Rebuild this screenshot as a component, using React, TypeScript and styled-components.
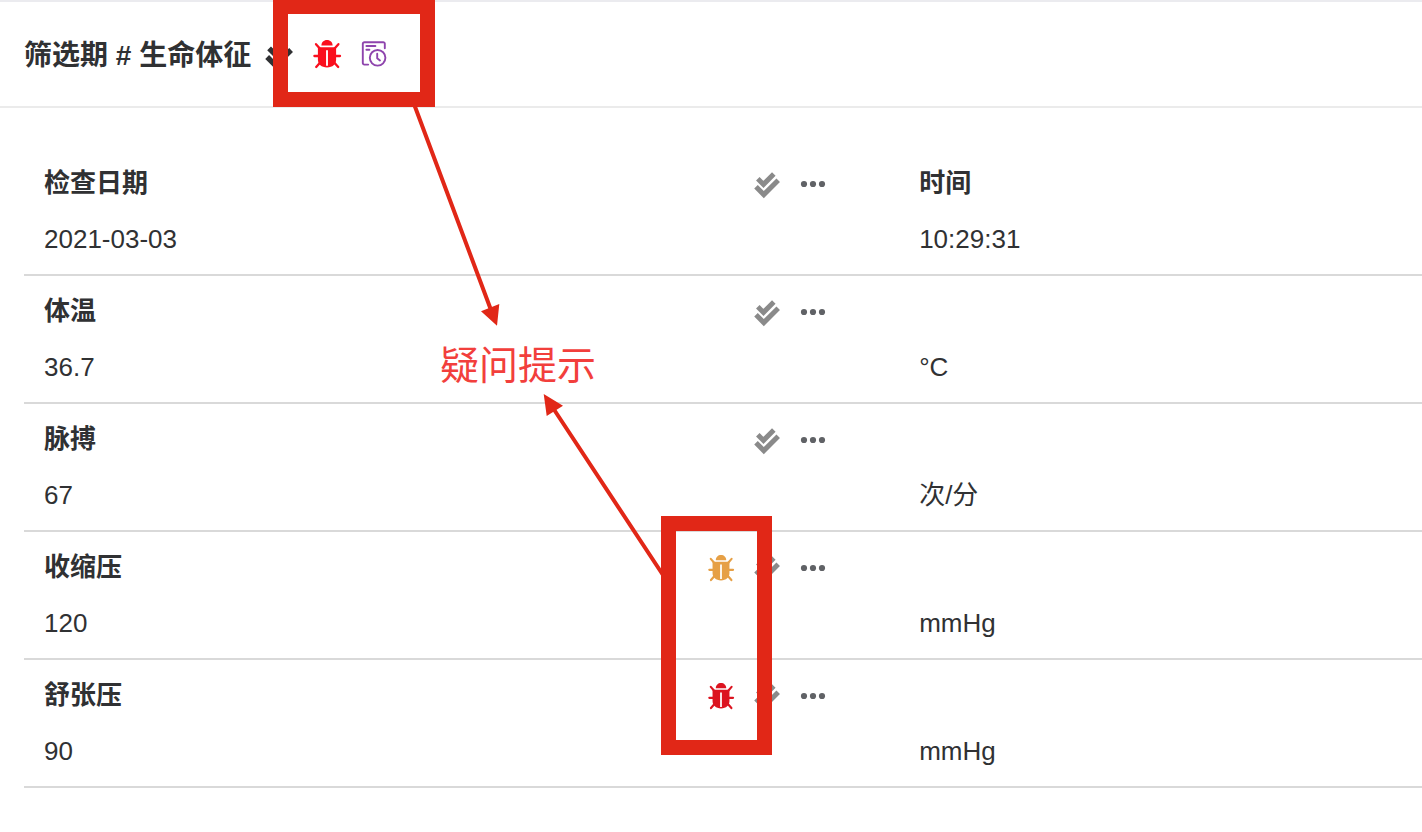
import React from 'react';
import styled, { createGlobalStyle } from 'styled-components';

const GlobalStyle = createGlobalStyle`
  * { box-sizing: border-box; }
  body {
    margin: 0;
    background: #fff;
    color: #303133;
    font-family: "Liberation Sans", "Noto Sans CJK SC", sans-serif;
    font-size: 26px;
  }
`;

const ANNOTATION_RED = '#e12717';

const Page = styled.main`
  position: relative;
  overflow: hidden;
  min-height: 100vh;
`;

const Header = styled.header`
  display: flex;
  align-items: center;
  height: 108px;
  padding: 0 24px;
  border-top: 2px solid #ebebef;
  border-bottom: 2px solid #ebebeb;
`;

const Title = styled.h1`
  margin: 0 14px 0 0;
  padding-top: 4px;
  font-size: 28px;
  line-height: 40px;
  font-weight: 700;
  white-space: nowrap;
`;

const HeaderActions = styled.div`
  display: flex;
  align-items: center;
  gap: 20px;
`;

const IconButton = styled.button<{ $color: string }>`
  display: flex;
  flex: none;
  padding: 0;
  border: 0;
  background: none;
  color: ${(p) => p.$color};
  cursor: pointer;

  svg {
    overflow: visible;
  }
`;

const Form = styled.section`
  padding: 40px 0 40px 24px;
`;

const Row = styled.div`
  display: grid;
  grid-template-columns: 62.6% 1fr;
  padding: 7px 0;
  border-bottom: 2px solid #d9d9d9;
`;

const Field = styled.dl`
  margin: 0;
  padding-left: 20px;
`;

const LabelLine = styled.div`
  display: flex;
  align-items: center;
  height: 56px;
  padding-right: 73px;
`;

const Label = styled.dt`
  flex: 1;
  line-height: 56px;
  font-weight: 700;
`;

const Value = styled.dd`
  margin: 0;
  height: 56px;
  line-height: 56px;
`;

const RowActions = styled.div`
  display: flex;
  align-items: center;
  gap: 20px;
  padding-top: 2px;
`;

const Annotations = styled.div`
  position: absolute;
  inset: 0;
  pointer-events: none;
`;

const Frame = styled.div<{ $x: number; $y: number; $w: number; $h: number }>`
  position: absolute;
  left: ${(p) => p.$x}px;
  top: ${(p) => p.$y}px;
  width: ${(p) => p.$w}px;
  height: ${(p) => p.$h}px;
  border: 15px solid ${ANNOTATION_RED};
`;

const Arrows = styled.svg`
  position: absolute;
  left: 0;
  top: 0;
`;

const Note = styled.p`
  position: absolute;
  left: 440px;
  top: 338px;
  margin: 0;
  color: #f23f3c;
  font-size: 39px;
  line-height: 56px;
  white-space: nowrap;
`;

const BugIcon = ({ size = 26 }: { size?: number }) => (
  <svg width={size} height={size + 2} viewBox="0 0 28 30" aria-hidden="true">
    <path d="M8.4 6.6C8.4 3.2 10.8 1 14 1s5.6 2.2 5.6 5.6z" fill="currentColor" />
    <path
      d="M4.9 8.2h18.2v12.3c0 4.9-3.5 7.9-9.1 7.9s-9.1-3-9.1-7.9z"
      fill="currentColor"
    />
    <path
      d="M3 5.2l3.6 4.1M25.4 5.2l-3.6 4.1M1.4 17h5.2M27 17h-5.6M3.2 28l4-4.6M25.2 28l-4-4.6"
      fill="none"
      stroke="currentColor"
      strokeWidth="2.3"
      strokeLinecap="round"
    />
    <path d="M14 11.2v15.6" stroke="#fff" strokeWidth="1.9" />
  </svg>
);

const DoubleCheckIcon = ({ size = 26 }: { size?: number }) => (
  <svg width={size} height={size} viewBox="0 0 26 26" aria-hidden="true">
    <path
      d="M3.8 7.8l5.7 5.6L19.8 3.1M2 15.8l7.8 7.8L24.2 9.3"
      fill="none"
      stroke="currentColor"
      strokeWidth="5"
    />
  </svg>
);

const HistoryIcon = () => (
  <svg
    width="26"
    height="26"
    viewBox="0 0 26 26"
    fill="none"
    stroke="currentColor"
    strokeWidth="1.9"
    strokeLinecap="round"
    strokeLinejoin="round"
    aria-hidden="true"
  >
    <path d="M7.2 23.6H3.4a1.6 1.6 0 0 1-1.6-1.6V2.8a1.6 1.6 0 0 1 1.6-1.6h18.8a1.6 1.6 0 0 1 1.6 1.6v4.4M5.4 5h9M5.4 8.8h3" />
    <circle cx="16.6" cy="16.8" r="7.8" />
    <path d="M16.2 12.8v4.4l2.8 2.3" />
  </svg>
);

const MoreIcon = () => (
  <svg width="26" height="26" viewBox="0 0 26 26" fill="currentColor" aria-hidden="true">
    <circle cx="4" cy="13" r="3.1" />
    <circle cx="13" cy="13" r="3.1" />
    <circle cx="22" cy="13" r="3.1" />
  </svg>
);

interface RowData {
  label: string;
  value: string;
  sideLabel?: string;
  sideValue: string;
  queryColor?: string;
}

const rows: RowData[] = [
  { label: '检查日期', value: '2021-03-03', sideLabel: '时间', sideValue: '10:29:31' },
  { label: '体温', value: '36.7', sideValue: '°C' },
  { label: '脉搏', value: '67', sideValue: '次/分' },
  { label: '收缩压', value: '120', sideValue: 'mmHg', queryColor: '#e6a046' },
  { label: '舒张压', value: '90', sideValue: 'mmHg', queryColor: '#dc1420' },
];

const FormRow = ({ row }: { row: RowData }) => (
  <Row>
    <Field>
      <LabelLine>
        <Label>{row.label}</Label>
        <RowActions>
          {row.queryColor && (
            <IconButton type="button" $color={row.queryColor} aria-label="疑问">
              <BugIcon />
            </IconButton>
          )}
          <IconButton type="button" $color="#8a8a8a" aria-label="核查">
            <DoubleCheckIcon />
          </IconButton>
          <IconButton type="button" $color="#606266" aria-label="更多">
            <MoreIcon />
          </IconButton>
        </RowActions>
      </LabelLine>
      <Value>{row.value}</Value>
    </Field>
    <Field>
      <LabelLine>{row.sideLabel && <Label>{row.sideLabel}</Label>}</LabelLine>
      <Value>{row.sideValue}</Value>
    </Field>
  </Row>
);

export default function App() {
  return (
    <Page>
      <GlobalStyle />
      <Header>
        <Title>筛选期 # 生命体征</Title>
        <HeaderActions>
          <IconButton type="button" $color="#303133" aria-label="核查">
            <DoubleCheckIcon size={28} />
          </IconButton>
          <IconButton type="button" $color="#fa0f1e" aria-label="疑问">
            <BugIcon size={28} />
          </IconButton>
          <IconButton type="button" $color="#8e44ad" aria-label="历史记录">
            <HistoryIcon />
          </IconButton>
        </HeaderActions>
      </Header>
      <Form>
        {rows.map((row) => (
          <FormRow key={row.label} row={row} />
        ))}
      </Form>
      <Annotations>
        <Frame $x={273} $y={-1} $w={162} $h={108} />
        <Frame $x={661} $y={516} $w={111} $h={239} />
        <Arrows width="700" height="600" viewBox="0 0 700 600" aria-hidden="true">
          <path d="M414 104L491 310M663 575L553 408" stroke={ANNOTATION_RED} strokeWidth="4" />
          <path
            d="M481 311.3L499.3 304 497 325.7zM543.7 394L563 405.7 546.7 416z"
            fill={ANNOTATION_RED}
          />
        </Arrows>
        <Note>疑问提示</Note>
      </Annotations>
    </Page>
  );
}
